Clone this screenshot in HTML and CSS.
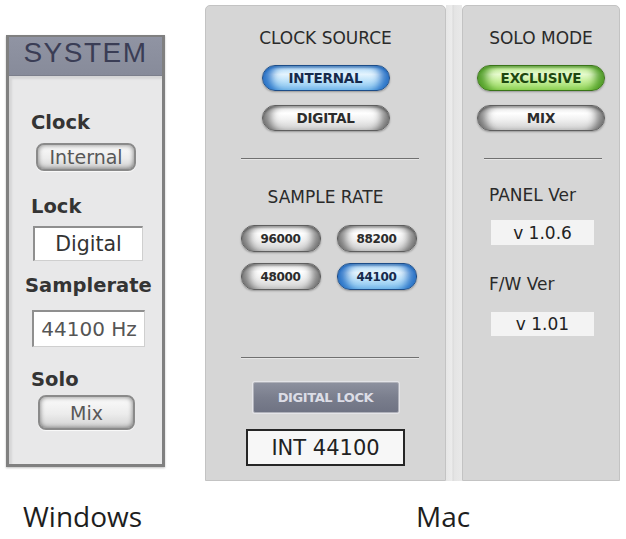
FILE: index.html
```html
<!DOCTYPE html>
<html lang="en">
<head>
<meta charset="utf-8">
<title>System settings</title>
<link rel="stylesheet" href="styles.css">
</head>
<body>
<div class="stage">
  <!-- Windows control panel -->
  <section class="win">
    <header class="win-head">SYSTEM</header>
    <div class="win-body">
      <div class="win-label">Clock</div>
      <div class="win-btn win-btn-clock">Internal</div>
      <div class="win-label win-label-lock">Lock</div>
      <div class="win-field win-field-lock">Digital</div>
      <div class="win-label win-label-rate">Samplerate</div>
      <div class="win-field win-field-rate">44100 Hz</div>
      <div class="win-label win-label-solo">Solo</div>
      <div class="win-btn win-btn-solo">Mix</div>
    </div>
  </section>

  <!-- Mac control panel -->
  <section class="mac">
    <div class="mac-col mac-col-main">
      <div class="mac-title">CLOCK SOURCE</div>
      <div class="pill-stack">
        <div class="pill pill-blue">INTERNAL</div>
        <div class="pill">DIGITAL</div>
      </div>
      <div class="rule"></div>
      <div class="mac-title mac-title-rate">SAMPLE RATE</div>
      <div class="rate-grid">
        <div class="pill pill-sm">96000</div>
        <div class="pill pill-sm">88200</div>
        <div class="pill pill-sm">48000</div>
        <div class="pill pill-sm pill-blue">44100</div>
      </div>
      <div class="rule rule-low"></div>
      <div class="lock-btn">DIGITAL LOCK</div>
      <div class="readout">INT 44100</div>
    </div>
    <div class="mac-gutter"></div>
    <div class="mac-col mac-col-side">
      <div class="mac-title">SOLO MODE</div>
      <div class="pill-stack">
        <div class="pill pill-green">EXCLUSIVE</div>
        <div class="pill">MIX</div>
      </div>
      <div class="rule rule-side"></div>
      <div class="ver-label ver-label-panel">PANEL Ver</div>
      <div class="ver-box ver-box-panel">v 1.0.6</div>
      <div class="ver-label ver-label-fw">F/W Ver</div>
      <div class="ver-box ver-box-fw">v 1.01</div>
    </div>
  </section>
</div>

<div class="captions">
  <div class="caption">Windows</div>
  <div class="caption">Mac</div>
</div>
</body>
</html>
```

FILE: styles.css
```css
html, body {
  margin: 0;
  padding: 0;
  background: #ffffff;
}

body {
  width: 626px;
  height: 539px;
  overflow: hidden;
  font-family: "DejaVu Sans", sans-serif;
}

.stage {
  display: flex;
  align-items: flex-start;
  gap: 40px;
  padding: 5px 0 0 6px;
}

/* ---------- Windows panel ---------- */

.win {
  width: 159px;
  height: 432px;
  margin-top: 30px;
  box-sizing: border-box;
  border: 3px solid #808080;
  border-top-width: 2px;
  background: #e8e8e9;
  display: flex;
  flex-direction: column;
  box-shadow: 0 1px 2px rgba(0, 0, 0, 0.25);
}

.win-head {
  height: 38px;
  flex: none;
  background: linear-gradient(#9094a3, #878b9a);
  color: #3a3d55;
  font-family: "Liberation Sans", sans-serif;
  font-size: 28px;
  line-height: 32px;
  letter-spacing: 1.5px;
  text-align: center;
  border-bottom: 1px solid #7c7f8c;
}

.win-body {
  flex: 1;
  display: flex;
  flex-direction: column;
  align-items: flex-start;
  padding: 35px 0 0 22px;
  box-shadow: inset 3px 3px 2px rgba(0, 0, 0, 0.08);
}

.win-label {
  font-weight: bold;
  font-size: 19.5px;
  line-height: 24px;
  color: #343434;
}

.win-label-lock { margin-top: 24px; }
.win-label-rate { margin-top: 13px; margin-left: -6px; }
.win-label-solo { margin-top: 21px; }

.win-btn {
  box-sizing: border-box;
  display: flex;
  align-items: center;
  justify-content: center;
  border: 2px solid #8a8a8a;
  border-radius: 8px;
  background: linear-gradient(#fbfbfb, #ececec 55%, #d2d2d2);
  box-shadow: inset 0 0 5px rgba(0, 0, 0, 0.5), 0 1px 1px rgba(255, 255, 255, 0.8);
  color: #585858;
  font-size: 19px;
}

.win-btn-clock {
  width: 100px;
  height: 28px;
  margin: 8px 0 0 5px;
}

.win-btn-solo {
  width: 97px;
  height: 35px;
  margin: 3px 0 0 7px;
}

.win-field {
  box-sizing: border-box;
  display: flex;
  align-items: center;
  justify-content: center;
  background: #ffffff;
  border-top: 2px solid #8f8f8f;
  border-left: 2px solid #8f8f8f;
  border-right: 1px solid #cfcfcf;
  border-bottom: 1px solid #cfcfcf;
  font-size: 20px;
}

.win-field-lock {
  width: 110px;
  height: 35px;
  margin: 7px 0 0 2px;
  color: #333333;
  font-size: 20.5px;
}

.win-field-rate {
  width: 113px;
  height: 37px;
  margin: 12px 0 0 1px;
  color: #555555;
}

/* ---------- Mac panel ---------- */

.mac {
  display: flex;
  height: 476px;
}

.mac-col {
  box-sizing: border-box;
  height: 100%;
  background: #d6d6d6;
  border: 1px solid #c3c3c3;
  border-radius: 5px 5px 0 0;
  display: flex;
  flex-direction: column;
  align-items: center;
  padding-top: 22px;
}

.mac-col-main { width: 241px; }
.mac-col-side { width: 158px; }

.mac-gutter {
  width: 16px;
  height: 100%;
  background: linear-gradient(90deg, #e6e6e6 0, #ececec 6px, #d9d9d9 7px, #e4e4e4 8px, #e9e9e9 100%);
}

.mac-title {
  font-size: 17px;
  line-height: 20px;
  color: #2a2a2a;
  white-space: nowrap;
}

.mac-title-rate { margin-top: 28px; }

.pill-stack {
  display: flex;
  flex-direction: column;
  gap: 14px;
  margin-top: 17px;
}

.pill {
  box-sizing: border-box;
  width: 128px;
  height: 26px;
  display: flex;
  align-items: center;
  justify-content: center;
  border-radius: 13px;
  border: 1px solid #5e5e5e;
  background: linear-gradient(#e2e2e2 0%, #ffffff 30%, #f2f2f2 55%, #cfcfcf 100%);
  box-shadow:
    inset 13px 0 9px -6px rgba(0, 0, 0, 0.5),
    inset -13px 0 9px -6px rgba(0, 0, 0, 0.5),
    inset 0 2px 2px rgba(0, 0, 0, 0.25),
    0 1px 2px rgba(0, 0, 0, 0.3);
  font-weight: bold;
  font-size: 13.5px;
  letter-spacing: -0.2px;
  color: #2c2c2c;
  white-space: nowrap;
}

.pill-blue {
  border-color: #1d4d88;
  background: linear-gradient(#a9d6f6 0%, #e4f4fe 35%, #bfe3fa 60%, #7fc0ee 100%);
  box-shadow:
    inset 14px 0 9px -6px rgba(18, 96, 190, 0.85),
    inset -14px 0 9px -6px rgba(18, 96, 190, 0.85),
    inset 0 2px 2px rgba(10, 60, 130, 0.45),
    0 1px 2px rgba(0, 0, 0, 0.3);
  color: #162a4c;
}

.pill-green {
  border-color: #3a7419;
  background: linear-gradient(#b9e98b 0%, #e7fbcf 35%, #c8f09e 60%, #94d65a 100%);
  box-shadow:
    inset 14px 0 9px -6px rgba(70, 150, 30, 0.9),
    inset -14px 0 9px -6px rgba(70, 150, 30, 0.9),
    inset 0 2px 2px rgba(40, 100, 20, 0.45),
    0 1px 2px rgba(0, 0, 0, 0.3);
  color: #1e4810;
}

.pill-sm {
  width: 80px;
  height: 27px;
  font-size: 12px;
  font-weight: bold;
  letter-spacing: -0.3px;
}

.rate-grid {
  display: grid;
  grid-template-columns: 80px 80px;
  column-gap: 16px;
  row-gap: 11px;
  margin-top: 18px;
  margin-left: 6px;
}

.rule {
  width: 178px;
  height: 1px;
  margin-top: 27px;
  background: #707070;
  box-shadow: 0 1px 0 #e6e6e6;
  margin-left: 8px;
}

.rule-low { margin-top: 67px; }

.rule-side {
  width: 118px;
  margin-left: 4px;
}

.lock-btn {
  box-sizing: border-box;
  width: 146px;
  height: 31px;
  margin-top: 24px;
  display: flex;
  align-items: center;
  justify-content: center;
  border: 1px solid #b0b2ba;
  border-radius: 2px;
  background: linear-gradient(#8c909e, #7a7e8d 50%, #6f7383);
  box-shadow: 0 0 0 1px #e4e4e8;
  color: #dcdde6;
  font-weight: bold;
  font-size: 13px;
  letter-spacing: -0.4px;
}

.readout {
  box-sizing: border-box;
  width: 159px;
  height: 37px;
  margin-top: 16px;
  display: flex;
  align-items: center;
  justify-content: center;
  background: #f7f7f7;
  border: 2px solid #262626;
  font-size: 21px;
  color: #222222;
}

.ver-label {
  align-self: flex-start;
  margin-left: 26px;
  font-size: 17px;
  line-height: 20px;
  color: #2a2a2a;
}

.ver-label-panel { margin-top: 26px; }
.ver-label-fw { margin-top: 29px; }

.ver-box {
  align-self: flex-start;
  margin-left: 28px;
  width: 103px;
  display: flex;
  align-items: center;
  justify-content: center;
  background: #f3f3f3;
  font-size: 17px;
  color: #222222;
}

.ver-box-panel { height: 25px; margin-top: 15px; }
.ver-box-fw { height: 24px; margin-top: 18px; }

/* ---------- captions ---------- */

.captions {
  display: grid;
  grid-template-columns: 393px auto;
  padding: 17px 0 0 23px;
}

.caption {
  font-family: "Open Sans", sans-serif;
  font-size: 28px;
  line-height: 36px;
  color: #1e1e1e;
}
```
